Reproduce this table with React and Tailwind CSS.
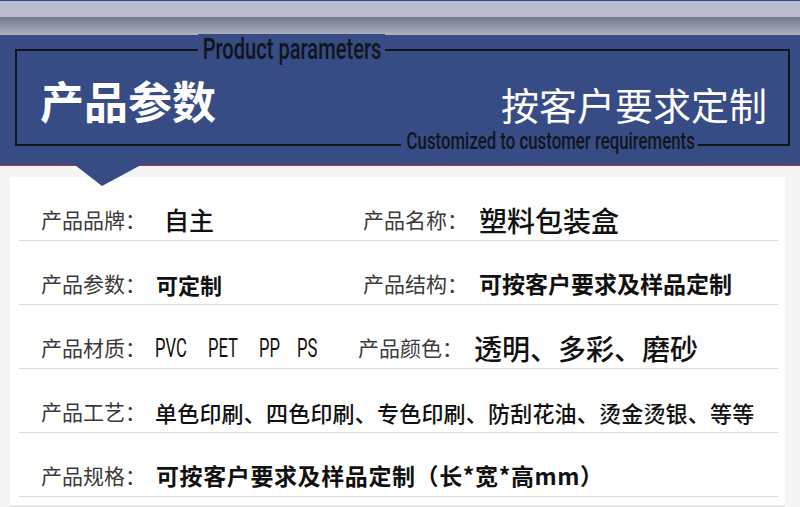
const cjk = "font-['Noto_Sans_CJK_SC','Noto_Sans',sans-serif]"
const latin = "font-['Liberation_Sans',Arial,sans-serif]"
const narrow = "font-['Roboto','Liberation_Sans',sans-serif]"

function Row({ children }) {
  return (
    <div className="mr-[7px] ml-[9px] flex h-[64px] items-center border-b border-[#dcdcdc] pt-[22px] pl-[22px]">
      {children}
    </div>
  )
}

function Label({ children }) {
  return <span className="shrink-0 text-[21px] leading-none text-[#3a3a3a]">{children}</span>
}

export default function App() {
  return (
    <div className={`${cjk} relative h-[507px] w-[800px] overflow-hidden bg-[#f5f5f5]`}>
      {/* top bands */}
      <div className="h-px bg-[#2e4a8c]" />
      <div className="h-[16px] bg-[#b8bdcf]" />
      <div className="h-[18px] bg-gradient-to-b from-[#737a8c] to-[#aeb2bf]" />

      {/* header */}
      <div className="h-[130px] bg-[#374c85] pt-[14px] pr-[10px] pl-[15px]">
        <div className="relative flex h-[97px] items-center justify-between border-2 border-[#12141c] pt-[4px] pr-[21px] pl-[23px]">
          <span className="absolute top-[-17px] left-[181px] inline-block origin-left scale-x-[0.67] bg-[#374c85] pr-[5px] pl-[7px]">
            <span className={`${narrow} text-[30px] leading-none font-medium whitespace-nowrap text-[#12141c]`}>
              Product parameters
            </span>
          </span>
          <span className="absolute top-[78px] left-[384px] inline-block origin-left scale-x-[0.70] bg-[#374c85] pr-[4px] pl-[8px]">
            <span className={`${narrow} text-[24px] leading-none font-medium whitespace-nowrap text-[#12141c]`}>
              Customized to customer requirements
            </span>
          </span>

          <h1 className="text-[44px] leading-none font-bold text-white">产品参数</h1>
          <span className="mt-[8px] text-[38px] leading-none text-white">按客户要求定制</span>
        </div>
      </div>
      <div className="h-px bg-[#b3373a]" />

      {/* pointer */}
      <svg className="absolute top-[165px] left-[75px]" width="66" height="21" viewBox="0 0 66 21">
        <polygon points="0,0 66,0 27,21" fill="#374c85" />
      </svg>

      {/* parameters card */}
      <div className="pt-[11px] pr-[15px] pl-[10px]">
        <div className="bg-white pb-[8px]">
          <Row>
            <div className="flex w-[322px] items-center">
              <Label>产品品牌：</Label>
              <span className="ml-[18px] text-[25px] leading-none font-medium text-[#111]">自主</span>
            </div>
            <div className="flex items-center">
              <Label>产品名称：</Label>
              <span className="ml-[11px] text-[28px] leading-none font-medium text-[#111]">塑料包装盒</span>
            </div>
          </Row>

          <Row>
            <div className="flex w-[322px] items-center">
              <Label>产品参数：</Label>
              <span className="ml-[10px] text-[22px] leading-none font-bold text-[#111]">可定制</span>
            </div>
            <div className="flex items-center">
              <Label>产品结构：</Label>
              <span className="ml-[11px] text-[23px] leading-none font-bold text-[#111]">
                可按客户要求及样品定制
              </span>
            </div>
          </Row>

          <Row>
            <div className="flex w-[317px] items-center">
              <Label>产品材质：</Label>
              <div className={`${narrow} ml-[9px] flex items-center text-[26px] leading-none text-[#111]`}>
                <span className="w-[53px]">
                  <span className="inline-block origin-left scale-x-[0.64]">PVC</span>
                </span>
                <span className="w-[51px]">
                  <span className="inline-block origin-left scale-x-[0.64]">PET</span>
                </span>
                <span className="w-[38px]">
                  <span className="inline-block origin-left scale-x-[0.64]">PP</span>
                </span>
                <span className="w-[30px]">
                  <span className="inline-block origin-left scale-x-[0.64]">PS</span>
                </span>
              </div>
            </div>
            <div className="flex items-center">
              <Label>产品颜色：</Label>
              <span className="ml-[11px] text-[28px] leading-none font-medium text-[#111]">透明、多彩、磨砂</span>
            </div>
          </Row>

          <Row>
            <Label>产品工艺：</Label>
            <span className="ml-[9px] text-[22px] leading-none tracking-[0.2px] font-medium text-[#111]">
              单色印刷、四色印刷、专色印刷、防刮花油、烫金烫银、等等
            </span>
          </Row>

          <Row>
            <Label>产品规格：</Label>
            <span className="ml-[10px] text-[23px] leading-none tracking-[0.6px] font-bold text-[#111]">
              可按客户要求及样品定制（长*宽*高mm）
            </span>
          </Row>
        </div>
        <div className="h-[2px] bg-[#e6e6e6]" />
      </div>
    </div>
  )
}
